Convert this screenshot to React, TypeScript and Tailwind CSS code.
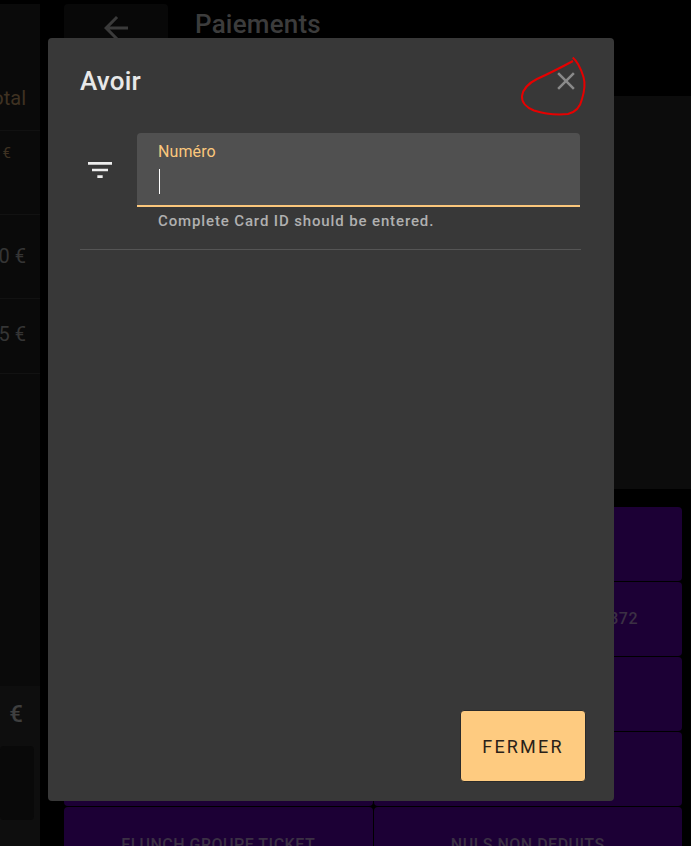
const font = { fontFamily: 'Roboto, sans-serif' };

function Backdrop() {
  return (
    <div className="flex h-[846px] gap-6 overflow-hidden bg-black">
      {/* Ticket column, scrolled off to the left */}
      <div className="flex w-10 shrink-0 flex-col overflow-hidden pt-1">
        <div className="flex h-[682px] flex-col bg-[#0a0a0a]">
          <div className="h-[72px] shrink-0" />
          <div className="flex h-[55px] shrink-0 items-start justify-end border-b border-[#111111] pr-3.5 pt-2.5 text-[20px] leading-6 text-[#3f3222]">
            otal
          </div>
          <div className="flex h-[84px] shrink-0 justify-end whitespace-nowrap border-b border-[#121212] pr-[29px] pt-3 text-[15px] leading-5 text-[#3f3222]">
            €
          </div>
          <div className="flex h-[84px] shrink-0 items-center justify-end whitespace-nowrap border-b border-[#121212] pb-0.5 pr-3.5 text-[20px] text-[#353535]">
            0 €
          </div>
          <div className="flex h-[75px] shrink-0 items-center justify-end whitespace-nowrap border-b border-[#121212] pb-1 pr-3.5 text-[20px] text-[#353535]">
            5 €
          </div>
        </div>
        <div className="flex grow flex-col bg-[#0e0e0e]">
          <div className="flex h-[56px] shrink-0 items-center justify-end pr-[17px] text-[24px] font-medium leading-7 text-[#3f3f3f]">
            €
          </div>
          <div className="mr-1.5 mt-1 h-[74px] rounded bg-[#090909]" />
        </div>
      </div>

      {/* Payment side */}
      <div className="flex min-w-0 grow flex-col">
        <div className="flex h-24 shrink-0 gap-[27px] pt-1">
          <div className="flex h-[88px] w-[104px] justify-center rounded bg-[#080808] pt-1.5">
            <svg width="36" height="36" viewBox="0 0 24 24" fill="#3a3a3a">
              <path d="M20 11H7.83l5.59-5.59L12 4l-8 8 8 8 1.41-1.41L7.83 13H20v-2z" />
            </svg>
          </div>
          <div className="text-[26px] font-medium leading-10 tracking-[0.2px] text-[#3c3c3c]">Paiements</div>
        </div>
        <div className="h-[393px] shrink-0 border-l border-[#2e2619] bg-[#0c0c0c]" />
        <div className="mr-[9px] mt-[18px] grid grow grid-cols-2 grid-rows-[74px_74px_74px_74px_74px] gap-px text-[16px] font-medium tracking-[0.5px] text-[#3b3044]">
          <div className="rounded-sm bg-[#1c0035]" />
          <div className="rounded-sm bg-[#1c0035]" />
          <div className="rounded-sm bg-[#1c0035]" />
          <div className="flex items-center justify-end rounded-sm bg-[#1c0035] pr-[44px]">372</div>
          <div className="rounded-sm bg-[#1c0035]" />
          <div className="rounded-sm bg-[#1c0035]" />
          <div className="rounded-sm bg-[#1c0035]" />
          <div className="rounded-sm bg-[#1c0035]" />
          <div className="rounded-sm bg-[#1c0035] pt-[26px] text-center">FLUNCH GROUPE TICKET</div>
          <div className="rounded-sm bg-[#1c0035] pt-[26px] text-center">NULS NON DEDUITS</div>
        </div>
      </div>
    </div>
  );
}

function Modal() {
  return (
    <div className="absolute left-12 top-[38px] flex h-[763px] w-[566px] flex-col rounded bg-[#383838] pb-[19px] pl-8 pr-[33px] text-[#e8e8e8]">
      <div className="flex h-[86px] shrink-0 items-center justify-between pb-[1px]">
        <h2 className="text-[26px] font-medium leading-8 tracking-[0.2px]">Avoir</h2>
        <svg width="30" height="30" viewBox="0 0 24 24" fill="#8a8a8a">
          <path d="M19 6.41L17.59 5 12 10.59 6.41 5 5 6.41 10.59 12 5 17.59 6.41 19 12 13.41 17.59 19 19 17.59 13.41 12z" />
        </svg>
      </div>

      <div className="mt-[9px] flex shrink-0 border-b border-[#555555] pb-[18px] pr-px">
        <div className="flex h-[73px] w-[57px] shrink-0 items-center pl-1">
          <svg width="32" height="32" viewBox="0 0 24 24" fill="#eeeeee">
            <path d="M10 18h4v-2h-4v2zM3 6v2h18V6H3zm3 7h12v-2H6v2z" />
          </svg>
        </div>
        <div className="min-w-0 grow">
          <div className="h-[74px] rounded-t border-b-2 border-[#fbc77c] bg-[#505050] pl-[21px] pt-[9px]">
            <div className="text-[16px] leading-5 tracking-[0.1px] text-[#fbc77c]">Numéro</div>
            <div className="ml-px mt-[7px] h-[25px] w-px bg-white" />
          </div>
          <p className="whitespace-nowrap pl-[21px] pt-1 text-[15px] font-medium leading-5 tracking-[0.87px] text-[#b0b0b0]">
            Complete Card ID should be entered.
          </p>
        </div>
      </div>

      <div className="-mr-[5px] mt-auto flex justify-end">
        <button className="h-[72px] w-[126px] rounded border border-[#2a2a2a] bg-[#fecb80] text-[18px] tracking-[2.2px] text-[#2a2218]">
          FERMER
        </button>
      </div>
    </div>
  );
}

export default function App() {
  return (
    <div className="relative h-[846px] w-[691px] overflow-hidden" style={font}>
      <Backdrop />
      <Modal />
      {/* Red hand-drawn circle from the annotated screenshot */}
      <svg className="absolute left-0 top-0" width="691" height="846" fill="none">
        <path
          d="M572.7 57.5C577 61 581 69 583.5 77C585.5 84 584.5 91 582 99C580.5 106 576 112 568 114C558 115 545 114 534 110.5C526 107.5 521.5 102 522 96C523 89 529 83 537 79C548 74 560 68 573 61"
          stroke="#e60000"
          strokeWidth="2"
        />
      </svg>
    </div>
  );
}
